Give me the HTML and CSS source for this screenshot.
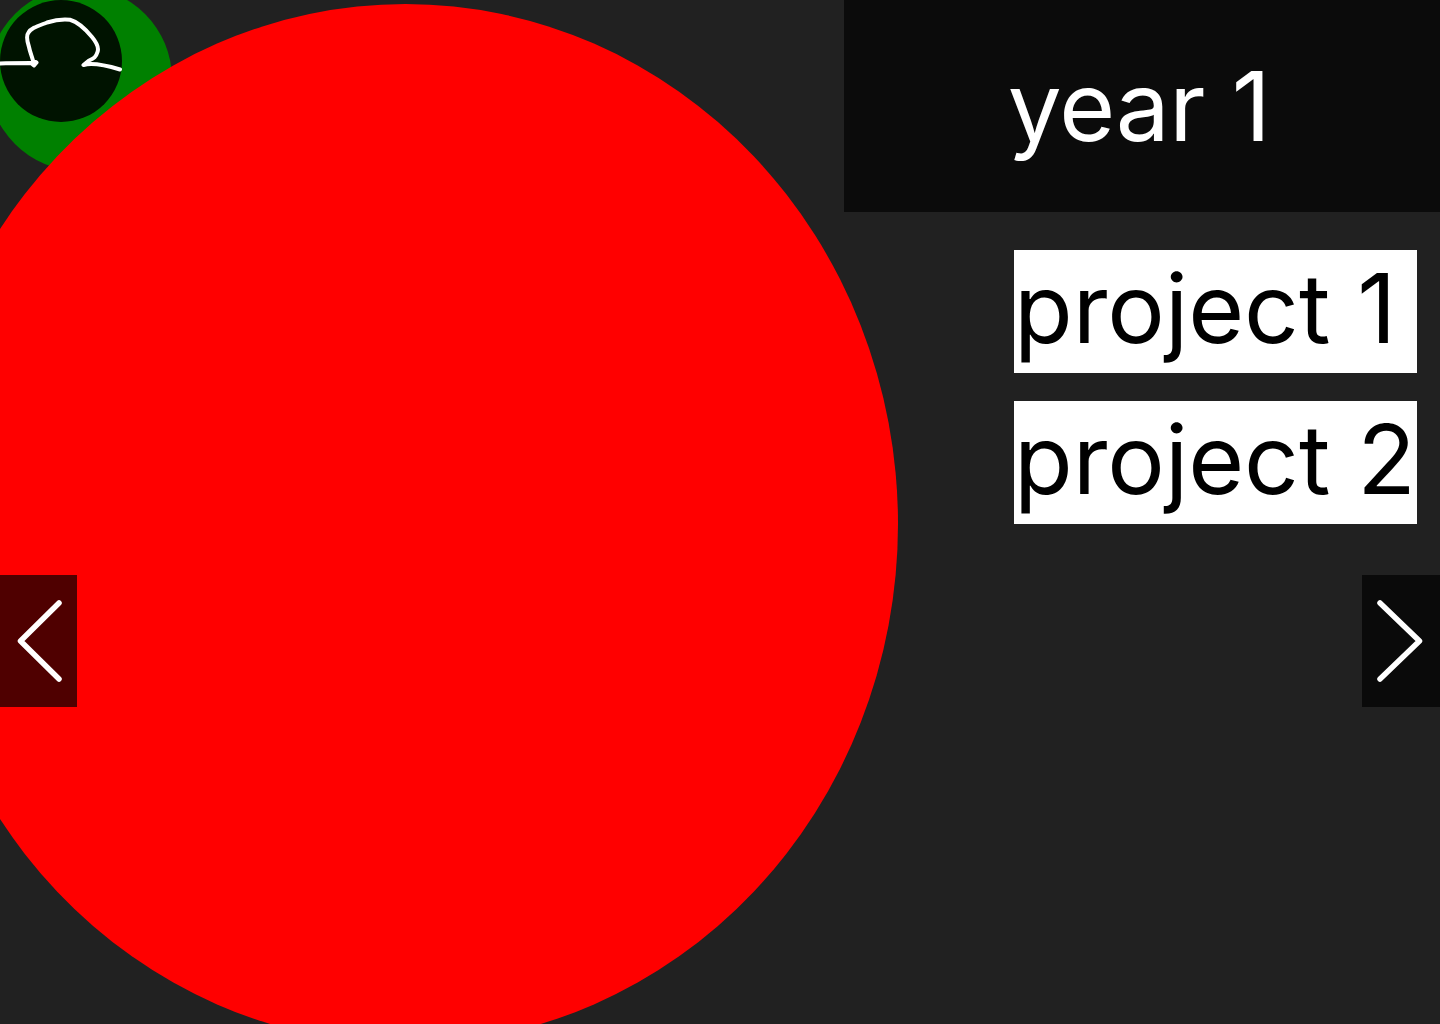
FILE: index.html
```html
<!DOCTYPE html>
<html lang="en">
<head>
<meta charset="utf-8">
<title>year 1</title>
<link rel="stylesheet" href="styles.css">
</head>
<body>
<main class="page">
  <div class="planet"></div>
  <div class="avatar-ring"></div>
  <div class="avatar">
    <svg class="avatar-sketch" viewBox="0 0 122 122" aria-hidden="true">
      <path d="M0 63.500 C10 63 22 63 31 63 L34 65.500 L36.500 62.500 L33 60.500 C31 54 30 52 29 47 C27 41 26.500 35 28.500 32.500 C31 28 38 26 47 22.500 C55 20 63 19 70 19.800 C78 22 87 31 92 37 C97 43 99 48 97.500 52 C96 57 94 58.500 89 60.500 L83.500 65 C90 63 100 63.500 120 69.500"/>
    </svg>
  </div>
  <aside class="sidebar">
    <header class="year">year 1</header>
    <ul class="projects">
      <li class="project">project 1</li>
      <li class="project">project 2</li>
    </ul>
  </aside>
  <button class="nav nav-prev" type="button" aria-label="Previous">
    <svg class="chevron" viewBox="0 0 78 132" aria-hidden="true"><path d="M59 28 L20.500 66 L59 104"/></svg>
  </button>
  <button class="nav nav-next" type="button" aria-label="Next">
    <svg class="chevron" viewBox="0 0 78 132" aria-hidden="true"><path d="M18 28 L57.500 66 L18 104"/></svg>
  </button>
</main>
</body>
</html>
```
FILE: styles.css
```css
* {
  box-sizing: border-box;
}

html,
body {
  margin: 0;
  background: #212121;
}

.page {
  position: relative;
  display: flex;
  justify-content: flex-end;
  width: 1440px;
  height: 1024px;
  overflow: hidden;
  font-family: Inter, "Liberation Sans", sans-serif;
}

.planet {
  position: absolute;
  left: -87px;
  top: 4px;
  width: 985px;
  height: 1040px;
  border-radius: 50%;
  background: #ff0000;
  z-index: 2;
}

.avatar-ring {
  position: absolute;
  left: -12px;
  top: -13px;
  width: 184px;
  height: 184px;
  border-radius: 50%;
  background: #008000;
  z-index: 1;
}

.avatar {
  position: absolute;
  left: 0;
  top: 0;
  width: 122px;
  height: 122px;
  border-radius: 50%;
  background: #001300;
  z-index: 1;
}

.avatar-sketch {
  display: block;
  width: 122px;
  height: 122px;
  fill: none;
  stroke: #ffffff;
  stroke-width: 4;
  stroke-linecap: round;
  stroke-linejoin: round;
}

.sidebar {
  display: flex;
  flex-direction: column;
  width: 596px;
}

.year {
  display: flex;
  align-items: center;
  justify-content: center;
  height: 212px;
  padding-right: 6px;
  background: #0b0b0b;
  color: #ffffff;
  font-size: 96px;
  letter-spacing: -0.4px;
}

.projects {
  display: flex;
  flex-direction: column;
  align-items: flex-end;
  gap: 28px;
  margin: 38px 23px 0 0;
  padding: 0;
  list-style: none;
}

.project {
  width: 403px;
  height: 123px;
  background: #ffffff;
  color: #000000;
  font-size: 96px;
  white-space: nowrap;
}

.nav {
  position: absolute;
  top: 575px;
  width: 78px;
  height: 132px;
  padding: 0;
  border: 0;
  background: rgba(0, 0, 0, 0.69);
  z-index: 3;
}

.nav-prev {
  left: 0;
  width: 77px;
}

.nav-next {
  right: 0;
}

.chevron {
  display: block;
  width: 78px;
  height: 132px;
  fill: none;
  stroke: #ffffff;
  stroke-width: 5.5;
  stroke-linecap: round;
  stroke-linejoin: round;
}
```
